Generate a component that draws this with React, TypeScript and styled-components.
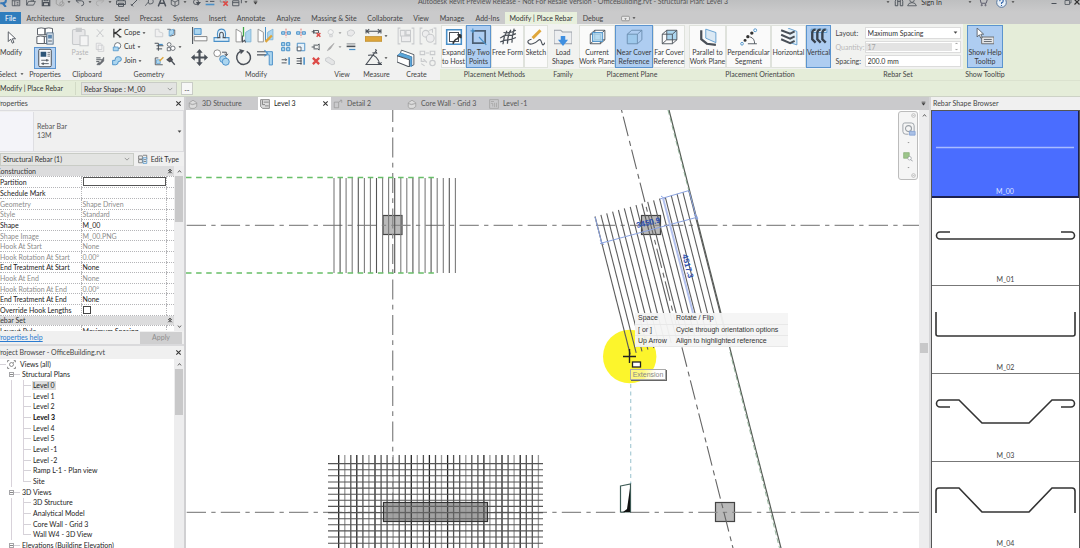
import React from 'react';
import styled, { createGlobalStyle, css } from 'styled-components';

const GlobalStyle = createGlobalStyle`
  * { box-sizing: border-box; }
  html, body { margin: 0; padding: 0; }
  body {
    font-family: Lato, "Liberation Sans", sans-serif;
    font-size: 7px;
    line-height: 9px;
    color: #333;
    background: #cacacb;
    overflow: hidden;
  }
  button, input, select { font: inherit; color: inherit; margin: 0; padding: 0; border: 0; border-radius: 0; background: none; }
`;

const INK = '#4a5058';
const BLUE = '#4a90c8';
const SKY = '#acd6ef';
const GREY = '#c8cacc';
const GOLD = '#dfa63a';
const RED = '#dc4a46';

/* ---------- icons ---------- */

const icons: Record<string, React.ReactNode> = {
  revit: <path d="M-3 16V1h9q5 0 5 4.500t-5 4.500H2M6 10l5 6" fill="none" stroke="#3677b5" strokeWidth="3.200" />,
  home: <g fill="none" stroke={INK} strokeWidth="1.300"><path d="M2 2h12v12H2zM2 6h12M6 6v8M9 9h3M9 11.500h3" /></g>,
  open: <path d="M1 13V3h5l1.500 2H12v2M1 13l3-6h11l-3 6z" fill="none" stroke={INK} strokeWidth="1.300" />,
  save: <path d="M2 2h12v12H2zM5 2v4h6V2M4 14V9h8v5" fill="none" stroke={INK} strokeWidth="1.800" />,
  sync: <g fill="none" stroke="#999" strokeWidth="1.300"><path d="M2 5l5-3 5 3v6l-5 3-5-3z" /><circle cx="11" cy="11" r="3.500" /></g>,
  undo: <path d="M6 2L2 6l4 4M2 6h8q4 0 4 4t-4 4" fill="none" stroke={INK} strokeWidth="1.400" />,
  redo: <path d="M10 2l4 4-4 4M14 6H6q-4 0-4 4t4 4" fill="none" stroke="#aaa" strokeWidth="1.400" />,
  print: <path d="M4 6V2h8v4M1 6h14v6H1zM4 10h8v5H4z" fill="none" stroke={INK} strokeWidth="1.500" />,
  dim: <path d="M2 14L14 2M1 11l4 4M11 1l4 4" fill="none" stroke={INK} strokeWidth="1.500" />,
  tag: <path d="M2 14l5-6M7 8a4 4 0 1 1 4 3H8z" fill="none" stroke={INK} strokeWidth="1.300" />,
  letter: <path d="M2 15L7.500 1h1L14 15M4.500 10h7" fill="none" stroke={INK} strokeWidth="2.200" />,
  cube: <path d="M2 5l6-3 6 3v7l-6 3-6-3zM2 5l6 3 6-3M8 8v7" fill="none" stroke={INK} strokeWidth="1.300" />,
  section: <g fill={INK}><circle cx="8" cy="8" r="4" fill="none" stroke={INK} strokeWidth="1.400" /><path d="M8 0l3 4H5zM8 8h8l-5 6z" /></g>,
  lines: <g fill="none"><path d="M1 3h14M1 7h4M8 7h7" stroke={INK} strokeWidth="1.500" /><path d="M1 12h14" stroke={BLUE} strokeWidth="2.500" /></g>,
  hide: <g fill="none"><path d="M2 3h9v5H2z" stroke="#888" strokeWidth="1.300" /><path d="M7 7l7 7M14 7l-7 7" stroke={RED} strokeWidth="2.500" /></g>,
  windows: <path d="M5 2h10v8M1 6h10v8H1zM1 9h10" fill="none" stroke={INK} strokeWidth="1.400" />,
  binoc: <path d="M2 14V7l2-5h2v12zM10 14V2h2l2 5v7zM6 7h4" fill="none" stroke={INK} strokeWidth="1.500" />,
  person: <g fill="none" stroke={INK} strokeWidth="1.300"><circle cx="8" cy="5" r="3.500" /><path d="M1 14q1-5 7-5t7 5z" /></g>,
  cart: <g fill="none" stroke="#556" strokeWidth="1.500"><path d="M0 2h3l2 8h8l2-6H4" /><circle cx="6" cy="13" r="1" /><circle cx="12" cy="13" r="1" /></g>,
  help: <g fill="none"><circle cx="8" cy="8" r="7" fill="#e8f0f8" stroke="#4a6c98" strokeWidth="1.300" /><path d="M5.500 6q0-2.500 2.500-2.500t2.500 2.300Q10.500 8 8 8.500V10M8 11.500v1.500" stroke="#2f62a8" strokeWidth="1.600" /></g>,
  min: <path d="M3 11h10" stroke={INK} strokeWidth="2" />,
  restore: <path d="M5 5V2h9v8h-3M2 5h9v8H2z" fill="none" stroke={INK} strokeWidth="1.500" />,
  close: <path d="M3 3l10 10M13 3L3 13" stroke="#333" strokeWidth="2.400" />,
  cursor: <path d="M4 1v12l3-3 2 5 2-1-2-4.500h4z" fill="#fff" stroke={INK} strokeWidth="1.100" />,
  typeProps: <g fill="#fff" stroke={INK} strokeWidth=".7"><path d="M2 2q3-1 6 0v5H2zM8 2q3-1 6 0v5H8zM1.500 8.500q3-1 6 0V14h-6z" /><path d="M7.500 8.500h2V14h-2z" /><rect x="9.500" y="5.500" width="5" height="9" fill="#dfe8f0" stroke="#4b6784" /><path d="M10.500 7h3v3h-3z" fill="#5c86ad" stroke="none" /><path d="M10.500 12h3" /></g>,
  props: <g><rect x="3" y="1" width="10" height="14" rx="1" fill="#f7f9fb" stroke={INK} strokeWidth=".8" /><path d="M4.500 3h4.500v4H4.500z" fill="#2d5578" /><path d="M10 3.500h2M10 5h2M10 6.500h2" stroke={INK} strokeWidth=".6" /><path d="M5 9.800h6M5 12.500h6" stroke={INK} strokeWidth=".7" /><path d="M9.500 8.800v2M6.500 11.500v2" stroke={INK} strokeWidth=".9" /></g>,
  paste: <g fill="#e8e8e9" stroke={GREY} strokeWidth=".9"><rect x="2" y="2" width="10" height="12" rx="1" /><path d="M5 1h4v2.500H5z" fill={GREY} /><path d="M8 7h6.500v8H8z" fill="#f4f4f4" /></g>,
  cutGrey: <path d="M3 2l9 10M13 2L4 12M2 13h3M11 13h3" stroke={GREY} strokeWidth="1.600" fill="none" />,
  copyGrey: <path d="M2 2h7l2 2v8H2zM5 5h7l2 2v8H5z" fill="#f2f2f2" stroke={GREY} strokeWidth="1.200" />,
  match: <g><path d="M2 3h7M2 6h9M2 9h5" stroke={INK} strokeWidth="1.500" /><path d="M14 2v6l-6 6H3l2-3 4-1z" fill="#6b6f74" stroke={INK} strokeWidth=".8" /></g>,
  cope: <g fill="none" stroke="#333"><path d="M3 1v14M13 2L6 8l7 6M11 2h4M11 14h4" strokeWidth="2" /><circle cx="5" cy="8" r="2" fill="#333" stroke="none" /></g>,
  cut: <g strokeWidth="1.200"><circle cx="9" cy="6" r="5" fill="#fff" stroke={INK} /><path d="M2 8h8v6H2z" fill={SKY} stroke={BLUE} /></g>,
  join: <path d="M5 5q0-4 5-4t5 4-5 4q0 5-4 5H1V7h4z" fill={SKY} stroke={BLUE} strokeWidth="1.500" />,
  wallGrey: <path d="M2 2h6v4l6 2v6H2z" fill="#f0f0f0" stroke={GREY} strokeWidth="1.300" />,
  beam: <g><path d="M1 2h6v12M4 6h11M4 11h9" stroke={INK} strokeWidth="1.600" fill="none" /><path d="M8 4h6" stroke={BLUE} strokeWidth="2" /></g>,
  splitPaint: <g><path d="M2 14V3h5M2 14h12" stroke={INK} fill="none" strokeWidth="1.400" /><path d="M4 6h6v6H4z" fill={SKY} stroke={BLUE} /><path d="M9 8l6-6" stroke={GOLD} strokeWidth="2.400" /></g>,
  paint: <g><path d="M2 2h5v11l7-2V3L9 5" fill="none" stroke={INK} strokeWidth="1.300" /><path d="M5 4l7-2v7l-7 4z" fill={SKY} stroke={BLUE} /></g>,
  unjoin: <g fill="#fff" stroke={INK} strokeWidth="1.200"><circle cx="5" cy="4" r="3" /><circle cx="11" cy="10" r="3.500" /><path d="M2 9h5v5H2z" /></g>,
  hammer: <path d="M2 6l5-4 3 4-4 3zM8 7l6 7" stroke={INK} fill="#6b5552" strokeWidth="2.200" />,
  align: <g><path d="M1.500 0v16" stroke={INK} strokeWidth="1" /><path d="M3 1.500h6.500v5.500H3z" fill={SKY} stroke={BLUE} strokeWidth=".9" /><path d="M3 9h12v4H3z" fill="#fafafa" stroke="#777" strokeWidth=".8" /></g>,
  offset: <g fill="none"><path d="M1 10h3.500Q3 2 8 2t3.500 8H15v3.500H1z" fill="#e2f0f9" stroke={BLUE} strokeWidth="1" /><path d="M4 10h2.500Q5.500 5 8 5t1.500 5H12" stroke={INK} strokeWidth="1" /></g>,
  mirrorAxis: <g><path d="M1 2l5 3v9H1z" fill="#fff" stroke="#888" strokeWidth=".8" /><path d="M15 2l-5 3v9h5z" fill={SKY} stroke="#7fb4d6" strokeWidth=".8" /><path d="M8 0v9" stroke="#3fa648" strokeWidth="1.200" /><path d="M7 8v6l2-1.500 1 2" stroke={INK} fill="none" /></g>,
  mirrorDraw: <g><path d="M1 2l5 3v9H1z" fill="#fff" stroke="#888" strokeWidth=".8" /><path d="M15 2l-5 3v7h5z" fill={SKY} stroke="#7fb4d6" strokeWidth=".8" /><path d="M8 0v13" stroke={BLUE} strokeWidth="1" /><path d="M8 14l6-6" stroke={GOLD} strokeWidth="2.200" /></g>,
  move: <path d="M8 0l3 3.500H9V7h3.500V5L16 8l-3.500 3V9H9v3.500h2L8 16l-3-3.500h2V9H3.500v2L0 8l3.500-3v2H7V3.500H5z" fill={INK} />,
  copy: <g><circle cx="4" cy="4" r="3.200" fill="#fff" stroke="#888" strokeWidth=".9" /><circle cx="9.500" cy="9.500" r="3.200" fill={SKY} stroke={BLUE} strokeWidth=".9" /><circle cx="12" cy="12" r="3.300" fill={SKY} stroke={BLUE} strokeWidth=".9" /><path d="M8.500 3h4v3M11 4.500l1.500 2 1.500-2" fill="none" stroke={INK} strokeWidth=".9" /></g>,
  rotate: <g><path d="M11 2.200A6.500 6.500 0 1 1 5 2.300" fill="none" stroke={INK} strokeWidth="1.400" /><path d="M4 0l5 1.500-3.500 3.500z" fill={INK} /></g>,
  trim: <g fill="none"><path d="M0 2.500h9M0 5.500h9" stroke={INK} strokeWidth="1" /><path d="M9 2.500h5.500V15h-3V5.500H9" fill={SKY} stroke={BLUE} strokeWidth=".9" /><path d="M7 1l3 3-3 3" stroke={BLUE} strokeWidth="1" /></g>,
  split: <g><path d="M1 6h5v4H1zM10 6h5v4h-5z" fill={SKY} stroke={BLUE} strokeWidth="1.500" /><path d="M8 1v14" stroke={RED} strokeWidth="1.200" strokeDasharray="3 1.500" /></g>,
  pinX: <g fill="none"><path d="M1 6h3M4 3v6M5 4h7v4H5z" stroke={INK} strokeWidth="1.400" /><path d="M9 8l6 6M15 8l-6 6" stroke={RED} strokeWidth="2.400" /></g>,
  array: <path d="M1 1h5v5H1zM9 1h5v5H9zM1 9h5v5H1zM9 9h5v5H9z" fill={SKY} stroke={BLUE} strokeWidth="1.600" />,
  scale: <g><path d="M2 2h12v12H2z" fill="#e7f2fa" stroke={BLUE} strokeWidth="1.500" /><path d="M2 8h6v6H2z" fill="#fff" stroke={INK} strokeWidth="1.300" /></g>,
  pin: <path d="M1 8h4M5 4v8M6 5h5l2-2v10l-2-2H6" fill="none" stroke={INK} strokeWidth="1.500" />,
  trimOne: <g fill="none"><path d="M1 6h8M1 11h8M7 4l2 2-2 2" stroke={INK} strokeWidth="1.500" /><path d="M13 2v12" stroke={BLUE} strokeWidth="2.500" /></g>,
  trimMulti: <g fill="none"><path d="M1 4h8M1 8h8M1 12h8M8 2v12" stroke={INK} strokeWidth="1.500" /><path d="M13 2v12" stroke={BLUE} strokeWidth="2.500" /></g>,
  del: <path d="M3 3l10 10M13 3L3 13" stroke={RED} strokeWidth="3.600" />,
  bulb: <path d="M6 11h4v3H6zM5 10q-3-3-1-6 3-3 7 0 2 3-1 6z" fill="#f4f4f4" stroke={GREY} strokeWidth="1.300" />,
  cloudGrey: <path d="M2 6l5-3 5 1 2 4-5 5-6-1z" fill="#e9e9ea" stroke={GREY} strokeWidth="1.500" />,
  brush: <path d="M2 14l3-5 8-7-6 9z" fill="#aaa" stroke="#aaa" />,
  weights: <g fill="none" stroke={INK}><path d="M1 3h14" strokeWidth="1" /><path d="M1 7h14" strokeWidth="2.500" /><path d="M5 12h10" stroke={BLUE} strokeWidth="2" /></g>,
  boxGrey: <path d="M1 4l5-2 9 6v5l-4 1-10-6z" fill="#e4e5e6" stroke={GREY} strokeWidth="1.500" />,
  ruler: <g><path d="M1 4h14M1 2v4M15 2v4M4 2L1.500 4 4 6M12 2l2.500 2L12 6" fill="none" stroke={INK} strokeWidth="1" /><path d="M0 9h16v4.500H0z" fill={GOLD} stroke="#b98a2c" strokeWidth=".7" /></g>,
  angle: <path d="M11 1L1 14.500h15M3 6q8-2 11 8.500M10 0l1 4-4-.500M14 14.500l-2-2M14 14.500l1.500-2" fill="none" stroke={INK} strokeWidth="1" />,
  groupGrey: <g fill="#ededee" stroke={GREY} strokeWidth=".9"><path d="M3 1H1v14h2M13 1h2v14h-2" fill="none" /><path d="M3 3h4v5H3zM8 3h4v4H8zM4 8h8v5H4z" /></g>,
  linkGrey: <g fill="#ededee" stroke={GREY} strokeWidth=".9"><path d="M3 1H1v14h2M13 1h2v14h-2" fill="none" /><circle cx="6" cy="6" r="3" /><circle cx="10" cy="10" r="3.500" /><path d="M9 3l3-1v3" /></g>,
  component: <g strokeLinejoin="round"><path d="M4 1l11 4v9l-2 1V7L3 3.500z" fill="#fff" stroke={INK} strokeWidth=".8" /><path d="M0 6l3-2.500L13 7v8.500l-2-.500V8.500z" fill="#5ba8da" stroke={BLUE} strokeWidth=".7" /><path d="M0 6l11 3.500V16L0 11.500z" fill="#fff" stroke={INK} strokeWidth=".9" /></g>,
  assemblyGrey: <g fill="none" stroke={GREY} strokeWidth="1"><path d="M1 2h4v3H1zM10 2h4v3h-4zM6 3.500h3M2 8v3h3M2 13l3 2M12 7v2" /><circle cx="12" cy="12.500" r="2.400" /><path d="M4 9l3 3" /></g>,
  expand: <g><path d="M1.500 1.500h13v13h-13z" fill="#fff" stroke={BLUE} strokeWidth="1.400" /><path d="M4 4h8v8H4z" fill="none" stroke={INK} strokeWidth=".9" /><path d="M7 14q2-4 3-4t4-4M14 6v3M14 6h-3" stroke="#333" strokeWidth="1.500" fill="none" /></g>,
  twoPoints: <g fill="none"><path d="M2.500 2.500h11v11h-11z" stroke="#4c5f74" strokeWidth="1.500" /><path d="M8 8l6.500 7M0.500 2.500h4M2.500 .500v4" stroke={BLUE} strokeWidth="1" /></g>,
  freeform: <path d="M1 12.500q4-2 7-2t7-2M1 9q4-3 7-2.500T15 5M4 4q6 1 11-2M3.500 14.500Q4 8 7 2.500M7.500 14q0-7 3-12.500M11.500 13q0-6 2-12.500" fill="none" stroke={INK} strokeWidth="1.100" />,
  sketch: <g fill="none"><path d="M4 10q-4 1-3 3t4 1 5-3 3 2 3 0" stroke={INK} strokeWidth="1" /><path d="M5 9l7-7" stroke={GOLD} strokeWidth="2.600" /></g>,
  load: <g><path d="M0 2h6l1.500 1.500H16V14H0z" fill="#eceef0" stroke="#9aa0a8" strokeWidth=".9" /><path d="M6 7h4v3.500h2.500L8 16l-4.500-5.500H6z" fill="#3f8fe0" /></g>,
  box: <g strokeLinejoin="round" strokeWidth=".8" stroke={INK} fill="none"><path d="M2 5.500L6 2h9v8.500L11 14H2zM2 5.500h9V14M11 5.500L15 2M6 2v8.500h9M2 14l4-3.500" /><path d="M4 4h9v8H4z" fill={SKY} fillOpacity=".85" stroke={BLUE} /></g>,
  boxNear: <g strokeLinejoin="round" strokeWidth=".8" stroke="#6a8cae" fill="none"><path d="M2 5.500h9V14H2z" fill="#9ec9ec" /><path d="M2 5.500L6 2h9l-4 3.500M15 2v8.500L11 14" /></g>,
  boxFar: <g strokeLinejoin="round" strokeWidth=".8" stroke={INK} fill="none"><path d="M6 2h9v8.500H6z" fill={SKY} /><path d="M2 5.500h9V14H2zM2 5.500L6 2M11 5.500L15 2M15 10.500L11 14M2 14l4-3.500" /></g>,
  parallel: <g><path d="M6 1l9 3v9L6 9z" fill="#dbe9f4" stroke={BLUE} strokeWidth=".7" /><path d="M2 2v8l5 4 8 1" fill="none" stroke={INK} strokeWidth="2" /></g>,
  perp: <g><path d="M7 14h8M9 8q4 1 4 6" stroke={INK} fill="none" strokeWidth=".8" /><g fill="#333"><circle cx="4.500" cy="11" r="1.300" /><circle cx="7" cy="7.700" r="1.500" /><circle cx="10.500" cy="4.500" r="1.500" /></g><circle cx="1.800" cy="14" r="1.200" fill="#fff" stroke={BLUE} strokeWidth=".8" /><circle cx="13.500" cy="2" r="1.300" fill="#fff" stroke={BLUE} strokeWidth=".8" /></g>,
  horizontal: <g fill="none"><path d="M7 0l8 3v12l-6-2" stroke={BLUE} strokeWidth=".7" fill="#e3eff7" /><path d="M1 2l8 3 4-2M1 6l8 3.500 4-2M1 10l8 3.500 4-2" stroke={INK} strokeWidth="1.800" /></g>,
  vertical: <g fill="none"><path d="M1 1h14v3H1z" fill="#d5e6f7" stroke={BLUE} strokeWidth=".7" /><path d="M5 1.500q-3 0-3 3V10l3 3M9.500 1.500q-3 0-3 3V10l3 3M14 1.500q-3 0-3 3V10l3 3" stroke="#38424e" strokeWidth="2.100" /></g>,
  tooltip: <g><path d="M5 8h11v6H5z" fill="#e4e6e8" stroke="#666" strokeWidth=".8" /><path d="M7 10.200h7M7 12h7" stroke={INK} strokeWidth=".7" /><path d="M1 0v8l2-2 1.200 3 1.300-.500L4.300 5.500h2.500z" fill="#fff" stroke={INK} strokeWidth=".7" /></g>,
  view3d: <path d="M2 6l6-4 6 4v6l-4 3H4l-2-3zM2 7l5 2 7-2" fill="#dcdcdc" stroke="#999" strokeWidth="1.200" />,
  plan: <g fill="none" stroke="#777" strokeWidth="1.300"><path d="M1 1h14v14H4l-3-3z" fill="#ddd" /><path d="M4 2v7h4M6 5h8M8 11h6" /></g>,
  detail: <path d="M2 5h7v9H2zM9 5l5-3M14 2v4M11 2h3" fill="none" stroke="#999" strokeWidth="1.200" />,
  sheet: <path d="M1 1h14v14H1zM3 4h5M3 7h3v5M9 6v7M12 6v7" fill="none" stroke="#a2a2a2" strokeWidth="1.200" />,
  editType: <g fill="none" stroke="#666" strokeWidth="1.200"><path d="M1 3h6v5H1zM8 2h6v6M1 9h6v5H1z" /><path d="M8 6h6v9H8z" fill="#e8f1f8" stroke={BLUE} /><path d="M9 9h4M9 12h4" /></g>,
  views: <g fill="none" stroke="#666" strokeWidth="1.300"><path d="M1 4V1h3M12 1h3v3M15 12v3h-3M4 15H1v-3" /><circle cx="8" cy="8" r="3.500" /><path d="M11 5l2-2" /></g>,
  wheel: <g fill="none" stroke="#9aa0a6"><path d="M2 3q0-2 2-2h7q3 0 3 3v6M2 3v7q0 3 3 3h3" strokeWidth="1" /><circle cx="8" cy="7" r="3.200" strokeWidth="1.200" /><path d="M9 10h6v4H9z" fill="#a9c0e6" stroke="#8aa5d4" /></g>,
  zoomRegion: <g><path d="M1 1h9v9H1z" fill="#9cc58a" stroke="#7fa86d" /><circle cx="10.500" cy="10" r="2.800" fill="#fff" stroke="#8a9096" /><path d="M12.500 12l3 3" stroke="#8a9096" strokeWidth="1.400" /></g>,
  gear: <g fill="none" stroke="#999" strokeWidth="1.600"><circle cx="8" cy="8" r="6" /><path d="M5 8h6" /></g>,
  record: <g><rect x="1" y="4" width="14" height="8" rx="2" fill="#e8e8e8" stroke="#777" strokeWidth="1.200" /><path d="M6 8h4l-2 2z" fill="#444" /></g>,
  chevUp: <path d="M3 11l5-6 5 6" fill="none" stroke="#333" strokeWidth="2.400" />,
  chevDown: <path d="M3 5l5 6 5-6" fill="none" stroke="#333" strokeWidth="2.400" />,
  chevLight: <path d="M2 5l6 6 6-6" fill="none" stroke="#777" strokeWidth="1.800" />,
  dblUp: <path d="M3 8l5-5 5 5M3 14l5-5 5 5M8 4v10" fill="none" stroke="#333" strokeWidth="2.200" />,
  caret: <path d="M2 5h12l-6 7z" fill="#444" />,
  caretGrey: <path d="M2 5h12l-6 7z" fill="#999" />,
  menuDown: <path d="M2 2h12v3H2zM2 7h12l-6 7z" fill="#333" />,
};

const Svg = styled.svg<{ $size: number }>`
  display: block;
  flex: none;
  width: ${p => p.$size}px;
  height: ${p => p.$size}px;
`;

const Icon = ({ name, size = 10 }: { name: string; size?: number }) => (
  <Svg viewBox="0 0 16 16" $size={size} aria-hidden="true">{icons[name]}</Svg>
);

/* ---------- window frame ---------- */

const Window = styled.div`
  display: flex;
  flex-direction: column;
  height: 100vh;
  overflow: hidden;
`;

const TitleBar = styled.header`
  display: flex;
  align-items: flex-end;
  height: 12px;
  overflow: hidden;
  background: linear-gradient(#bebfc0, #cacacb);
`;

const TitleGroup = styled.div`
  display: flex;
  flex: none;
  align-items: center;
  height: 18px;
  padding-bottom: 2px;
`;

const TitleItem = styled.button<{ $w: number }>`
  display: flex;
  flex: none;
  justify-content: center;
  width: ${p => p.$w}px;
`;

const TitleText = styled.h1`
  flex: 1;
  margin: 0;
  height: 16px;
  overflow: hidden;
  font-size: 7px;
  line-height: 10px;
  font-weight: 400;
  text-align: center;
  white-space: nowrap;
  color: #555;
`;

const Gap = styled.span<{ $w: number }>`
  flex: none;
  width: ${p => p.$w}px;
`;

const Tabs = styled.nav`
  display: flex;
  flex: none;
  height: 12px;
  background: #cacacb;
`;

const Tab = styled.button<{ $w: number; $kind?: 'file' | 'active' }>`
  display: flex;
  flex: none;
  align-items: center;
  justify-content: center;
  width: ${p => p.$w}px;
  white-space: nowrap;
  color: #444;
  ${p => p.$kind === 'file' && css`background: #2f7dbd; color: #fff;`}
  ${p => p.$kind === 'active' && css`background: #e8f0dc; color: #333;`}
`;

/* ---------- ribbon ---------- */

const Ribbon = styled.div`
  display: flex;
  flex: none;
  height: 56px;
  background: #e5edd9;
`;

const PanelBox = styled.section<{ $w: number; $green?: boolean; $bleed?: boolean }>`
  display: flex;
  flex: none;
  flex-direction: column;
  width: ${p => p.$w}px;
  margin-left: ${p => (p.$bleed ? -4 : 0)}px;
  background: ${p => (p.$green ? '#e5edd9' : '#f1f1f1')};
`;

const PanelBody = styled.div<{ $plain?: boolean }>`
  display: flex;
  flex: 1;
  align-items: center;
  justify-content: center;
  background: ${p => (p.$plain ? 'transparent' : '#f1f2f0')};
`;

const PanelTitle = styled.h2`
  display: flex;
  align-items: center;
  justify-content: center;
  gap: 3px;
  height: 11px;
  padding-bottom: 1px;
  margin: 0;
  font-size: 7px;
  font-weight: 400;
  white-space: nowrap;
  color: #444;
`;

const Panel = ({ title, width, green, bleed, plain, menu, children }: {
  title: string; width: number; green?: boolean; bleed?: boolean; plain?: boolean; menu?: boolean; children: React.ReactNode;
}) => (
  <PanelBox $w={width} $green={green} $bleed={bleed}>
    <PanelBody $plain={plain}>{children}</PanelBody>
    <PanelTitle>{title}{menu && <Icon name="caret" size={4} />}</PanelTitle>
  </PanelBox>
);

const BigButton = styled.button<{ $w: number; $on?: boolean; $flat?: boolean; $dim?: boolean }>`
  display: flex;
  flex: none;
  flex-direction: column;
  align-items: center;
  width: ${p => p.$w}px;
  height: 43px;
  border: 1px solid ${p => (p.$on ? '#5b94cf' : p.$flat ? 'transparent' : '#dfe2dc')};
  background: ${p => (p.$on ? '#aecdf1' : p.$flat ? 'transparent' : '#fafafa')};
  color: ${p => (p.$dim ? '#b5b5b5' : '#3a3a3a')};
  line-height: 9px;
  white-space: nowrap;
`;

const IconSlot = styled.span`
  display: flex;
  flex: none;
  align-items: center;
  height: 22px;
`;

const ButtonLabel = styled.span`
  display: flex;
  flex-direction: column;
  align-items: center;
`;

const Big = ({ icon, lines, w, size = 18, on, flat, dim, menu }: {
  icon: string; lines: string[]; w: number; size?: number; on?: boolean; flat?: boolean; dim?: boolean; menu?: boolean;
}) => (
  <BigButton $w={w} $on={on} $flat={flat} $dim={dim}>
    <IconSlot><Icon name={icon} size={size} /></IconSlot>
    <ButtonLabel>
      {lines.map(l => <span key={l}>{l}</span>)}
      {menu && <Icon name="caretGrey" size={4} />}
    </ButtonLabel>
  </BigButton>
);

const ToolGrid = styled.div<{ $cols: string; $row: number }>`
  display: grid;
  flex: none;
  grid-template-columns: ${p => p.$cols};
  grid-auto-rows: ${p => p.$row}px;
`;

const Tool = styled.button<{ $on?: boolean; $start?: boolean }>`
  display: flex;
  align-items: center;
  justify-content: ${p => (p.$start ? 'flex-start' : 'center')};
  gap: 2px;
  ${p => p.$on && css`background: #b5d2f2; outline: 1px solid #5b94cf; outline-offset: -1px;`}
`;

const SetForm = styled.form`
  display: grid;
  grid-template-columns: 29px 96px;
  grid-auto-rows: 12px;
  row-gap: 2px;
  align-items: stretch;
  line-height: 12px;
`;

const FieldLabel = styled.label<{ $dim?: boolean }>`
  color: ${p => (p.$dim ? '#b8b8b8' : '#444')};
`;

const Field = styled.span`
  display: flex;
  align-items: center;
  padding-right: 2px;
  border: 1px solid #dcdcdc;
  background: #fff;
`;

const Select = styled.select`
  appearance: none;
  flex: 1;
  min-width: 0;
  height: 10px;
  padding-left: 2px;
  line-height: 10px;
`;

const TextInput = styled.input`
  flex: 1;
  min-width: 0;
  height: 8px;
  padding-left: 2px;
  &:disabled { background: #e3e3e3; color: #a5a5a5; }
`;

const Spinner = styled.span`
  display: flex;
  flex-direction: column;
  gap: 3px;
  padding-left: 3px;
`;

const OptionsBar = styled.div`
  display: flex;
  flex: none;
  align-items: center;
  height: 17px;
  border-top: 1px solid #dbe2cf;
  border-bottom: 1px solid #cdd2c6;
  background: #e5edd9;
`;

const OptionsTitle = styled.strong`
  flex: none;
  width: 76px;
  border-right: 1px solid #d2dac6;
  font-weight: 400;
  line-height: 13px;
  white-space: nowrap;
`;

const Combo = styled.span<{ $w?: number }>`
  display: flex;
  align-items: center;
  ${p => (p.$w ? css`flex: none; width: ${p.$w}px;` : css`flex: 1;`)}
  height: 13px;
  padding-right: 3px;
  border: 1px solid #c9ccc6;
  background: #e3e4e2;
`;

const MoreButton = styled.button`
  width: 12px;
  height: 13px;
  margin-left: 4px;
  border: 1px solid #c9ccc6;
  background: #f7f7f7;
`;

/* ---------- left docks ---------- */

const Workspace = styled.main`
  display: flex;
  flex: 1;
  min-height: 0;
`;

const LeftDock = styled.aside`
  display: flex;
  flex: none;
  flex-direction: column;
  width: 186px;
  border-right: 2px solid #d0d0d2;
  background: #f0f0f0;
`;

const DockTitle = styled.h2<{ $indent?: number }>`
  display: flex;
  flex: none;
  align-items: center;
  justify-content: space-between;
  height: 13px;
  margin: 0;
  padding: 0 2px;
  overflow: hidden;
  font-size: 7px;
  font-weight: 400;
  color: #444;
  text-indent: ${p => p.$indent ?? 0}px;
  white-space: nowrap;
`;

const PlainButton = styled.button`
  display: flex;
  align-items: center;
  gap: 3px;
  text-indent: 0;
`;

const TypePicker = styled.div`
  display: flex;
  flex: none;
  align-items: center;
  gap: 3px;
  height: 42px;
  padding-right: 1px;
  border: 1px solid #dcdcdf;
  border-left: 0;
`;

const Thumb = styled.div`
  width: 34px;
  height: 39px;
  border-right: 1px solid #dedee2;
  background: #f4f4f9;
`;

const TypeName = styled.p`
  flex: 1;
  margin: 0;
  color: #555;
`;

const FilterRow = styled.div`
  display: flex;
  flex: none;
  align-items: center;
  gap: 4px;
  height: 14px;
  padding-right: 5px;
`;

const Scrolled = styled.div<{ $h?: number }>`
  display: flex;
  ${p => (p.$h ? css`flex: none; height: ${p.$h}px;` : css`flex: 1; min-height: 0;`)}
  overflow: hidden;
  background: #fff;
`;

const ScrollBar = styled.div`
  display: flex;
  flex: none;
  flex-direction: column;
  align-items: center;
  width: 10px;
  padding: 3px 0 2px;
  background: #ededee;
`;

const Thumbbar = styled.span<{ $h: number; $top?: number }>`
  flex: none;
  width: 8px;
  height: ${p => p.$h}px;
  margin-top: ${p => p.$top ?? 2}px;
  margin-bottom: auto;
  background: #c8c8c9;
`;

const PropTable = styled.table`
  flex: 1;
  height: 171px;
  border-collapse: collapse;
  table-layout: fixed;
  th, td {
    padding: 0;
    font-weight: 400;
    text-align: left;
    white-space: nowrap;
    line-height: 8px;
    border-bottom: 1px dotted #b5b5b8;
  }
  td { border-left: 1px dotted #b5b5b8; padding-left: 1px; }
`;

const SectionRow = styled.tr`
  background: #dcdcdd;
  th { text-indent: -4px; overflow: hidden; }
`;

const PropRow = styled.tr<{ $dim?: boolean }>`
  color: ${p => (p.$dim ? '#8c8c8c' : '#222')};
`;

const CellInput = styled.input`
  display: block;
  width: 100%;
  height: 9px;
  border: 1px solid #555;
`;

const Tick = styled.input`
  appearance: none;
  display: block;
  width: 8px;
  height: 8px;
  border: 1px solid #444;
  background: #fff;
`;

const SectionEnd = styled.div`
  display: flex;
  justify-content: center;
`;

const DockFooter = styled.div`
  display: flex;
  flex: none;
  align-items: center;
  justify-content: space-between;
  height: 15px;
  padding-right: 2px;
  border-bottom: 2px solid #dadadc;
  overflow: hidden;
`;

const HelpLink = styled.a`
  color: #2b7bd0;
  text-indent: -4px;
`;

const ApplyButton = styled.button`
  width: 42px;
  height: 12px;
  background: #cfcfd0;
  color: #8e8e8e;
`;

const Tree = styled.ul`
  display: grid;
  flex: 1;
  grid-template-rows: repeat(18, 1fr);
  height: 192px;
  margin: 0;
  padding: 0;
  list-style: none;
`;

const TreeRow = styled.li<{ $bold?: boolean }>`
  display: flex;
  align-items: center;
  white-space: nowrap;
  font-weight: ${p => (p.$bold ? 900 : 400)};
  color: #222;
`;

const Guide = styled.span<{ $w: number; $half?: boolean }>`
  flex: none;
  align-self: ${p => (p.$half ? 'flex-start' : 'stretch')};
  width: ${p => p.$w}px;
  height: ${p => (p.$half ? '50%' : 'auto')};
  border-left: 1px solid #d8d2da;
`;

const Dash = styled.span<{ $w: number }>`
  flex: none;
  width: ${p => p.$w}px;
  height: 1px;
  margin-right: 1px;
  background: #d5d2d8;
`;

const Expander = styled.button`
  display: flex;
  flex: none;
  align-items: center;
  justify-content: center;
  width: 5px;
  height: 5px;
  border: 1px solid #a5a5a8;
  background: linear-gradient(#888, #888) center / 3px 1px no-repeat #fff;
`;

const NodeText = styled.span<{ $sel?: boolean }>`
  padding: 0 1px;
  background: ${p => (p.$sel ? '#dcdcdd' : 'transparent')};
`;

/* ---------- drawing area ---------- */

const Center = styled.section`
  display: flex;
  flex: 1;
  flex-direction: column;
  min-width: 0;
  border-right: 2px solid #d5d5d7;
  background: #fff;
`;

const ViewTabs = styled.div`
  display: flex;
  flex: none;
  align-items: stretch;
  height: 13px;
  padding-right: 3px;
  background: #cacacc;
`;

const ViewTab = styled.button<{ $w: number; $on?: boolean }>`
  display: flex;
  flex: none;
  align-items: center;
  gap: 4px;
  width: ${p => p.$w}px;
  padding: 0 2px;
  white-space: nowrap;
  color: ${p => (p.$on ? '#222' : '#555')};
  background: ${p => (p.$on ? '#fff' : 'transparent')};
`;

const Push = styled.span`
  flex: 1;
`;

const ViewBody = styled.div`
  display: flex;
  flex: 1;
  min-height: 0;
`;

const Canvas = styled.div`
  position: relative;
  flex: 1;
  overflow: hidden;
`;

const Drawing = styled.svg`
  display: block;
  width: 100%;
  height: 100%;
`;

const Hints = styled.table`
  position: absolute;
  left: 449px;
  top: 203px;
  width: 153px;
  border-collapse: collapse;
  background: rgba(244, 244, 244, 0.95);
  font-family: "Liberation Sans", sans-serif;
  th, td {
    height: 11px;
    padding: 0 0 0 3px;
    border-bottom: 1px solid #e8e8e8;
    font-weight: 400;
    line-height: 10px;
    text-align: left;
    white-space: nowrap;
  }
  th { width: 38px; }
`;

const SnapTip = styled.div`
  position: absolute;
  left: 444px;
  top: 259px;
  width: 36px;
  height: 11px;
  border: 1px solid #aaa;
  box-shadow: 1px 1px 0 #666;
  background: linear-gradient(90deg, rgba(255, 248, 150, 0.8) 35%, #fff 75%);
  font-family: "Liberation Sans", sans-serif;
  line-height: 9px;
  text-align: center;
  color: #888;
`;

const NavBar = styled.div`
  position: absolute;
  top: 1px;
  right: 1px;
  display: flex;
  flex-direction: column;
  align-items: center;
  gap: 4px;
  width: 20px;
  height: 69px;
  padding: 1px;
  border: 1px solid #bcbcbc;
  border-radius: 3px;
  background: #f5f5f5;
`;

const NavEnd = styled.span`
  align-self: flex-end;
`;

const NavRule = styled.span`
  width: 14px;
  height: 1px;
  background: #ccc;
`;

/* ---------- shape browser ---------- */

const RightDock = styled.aside`
  display: flex;
  flex: none;
  flex-direction: column;
  width: 149px;
  background: #f0f0f0;
`;

const ShapeList = styled.div`
  flex: 1;
  min-height: 0;
  overflow: hidden;
  border: 1px solid #555;
  border-bottom: 0;
  background: #fff;
`;

const ShapeCell = styled.button<{ $on?: boolean }>`
  display: flex;
  flex-direction: column;
  align-items: center;
  width: 100%;
  height: ${p => (p.$on ? 87 : 88)}px;
  border-bottom: ${p => (p.$on ? '2px solid #1c2150' : '1px solid #777')};
  border-right: ${p => (p.$on ? '1px solid #1c2150' : '0')};
  background: ${p => (p.$on ? '#4a6dff' : '#fff')};
  color: ${p => (p.$on ? '#dfe5ff' : '#444')};
`;

const ShapeArt = styled.svg`
  display: block;
  width: 100%;
  height: 77px;
`;

/* ---------- data ---------- */

const quick: [string, number, number?][] = [
  ['revit', 8], ['home', 16], ['open', 14], ['save', 15], ['sync', 13], ['caret', 6, 4], ['undo', 15], ['caret', 5, 4],
  ['redo', 15], ['caret', 6, 4], ['print', 15], ['dim', 13], ['tag', 15], ['letter', 12], ['cube', 14], ['caret', 6, 4],
  ['section', 15], ['lines', 14], ['hide', 13], ['windows', 13], ['caret', 6, 4], ['menuDown', 13, 5],
];

const ribbonTabs: [string, number][] = [
  ['Architecture', 49], ['Structure', 39], ['Steel', 26], ['Precast', 32], ['Systems', 37], ['Insert', 27], ['Annotate', 40],
  ['Analyze', 35], ['Massing & Site', 56], ['Collaborate', 46], ['View', 26], ['Manage', 36], ['Add-Ins', 35],
  ['Modify | Place Rebar', 72], ['Debug', 32],
];

const properties: [string, string, boolean][] = [
  ['Partition', 'input', false], ['Schedule Mark', '', false], ['Geometry', 'Shape Driven', true], ['Style', 'Standard', true],
  ['Shape', 'M_00', false], ['Shape Image', 'M_00.PNG', true], ['Hook At Start', 'None', true],
  ['Hook Rotation At Start', '0.00°', true], ['End Treatment At Start', 'None', false], ['Hook At End', 'None', true],
  ['Hook Rotation At End', '0.00°', true], ['End Treatment At End', 'None', false], ['Override Hook Lengths', 'check', false],
];

const plans = ['Level 0', 'Level 1', 'Level 2', 'Level 3', 'Level 4', 'Level 5', 'Level -1', 'Level -2', 'Ramp L-1 - Plan view', 'Site'];
const views3d = ['3D Structure', 'Analytical Model', 'Core Wall - Grid 3', 'Wall W4 - 3D View'];

const shapes: [string, string][] = [
  ['M_00', 'M4 37H143'],
  ['M_01', 'M18 34H8a3.300 3.300 0 0 0 0 7H139a3.300 3.300 0 0 0 0-7H129'],
  ['M_02', 'M4 26V48q0 2 2 2H141q2 0 2-2V26'],
  ['M_03', 'M18 33H8a3.300 3.300 0 0 1 0-7H27L50 49H97L120 26H139a3.300 3.300 0 0 1 0 7H129'],
  ['M_04', 'M4 51V29q0-3 3-3H27L50 50H97L120 26H140q3 0 3 3V51'],
];

const range = (n: number) => Array.from({ length: n }, (_, i) => i);

const Plan = () => (
  <Drawing viewBox="186 110 733 438" preserveAspectRatio="xMinYMin slice" role="img" aria-label="Level 3 structural plan">
    <g fill="#b9b9b9" stroke="#444" strokeWidth="1.200">
      <rect x="383" y="215.500" width="19" height="19" />
      <rect x="641.500" y="215.500" width="19" height="19" />
      <rect x="715.500" y="502.500" width="19" height="19" />
      <rect x="383.500" y="502.500" width="104" height="19" />
    </g>
    <g fill="none" stroke="#8c8c8c" strokeWidth="1.300">
      <path d="M186.700 225.300H919M186.700 512.300H919" strokeDasharray="19.300 5.300 4.300 5.200" />
      <path d="M392.700 101.900V512" strokeDasharray="20 5.300 4.700 5.500" />
    </g>
    <g fill="none" stroke="#666" strokeWidth="1.100">
      <path d="M621 108L733.500 550" strokeDasharray="5 4 20 5" />
      <path d="M669 110L781.500 550" stroke="#565c56" strokeWidth="1.200" />
      <path d="M668 110L692 203M730 352L780 550" stroke="#7da487" strokeDasharray="5 3" strokeWidth=".8" />
    </g>
    <g fill="none" strokeWidth="1.100">
      {range(21).map(i => <path key={i} d={`M${(334 + i * 6.07).toFixed(1)} 178V273`} stroke={i % 3 === 1 ? '#555' : '#7c7c7c'} />)}
    </g>
    <path d="M186 177.500H437M186 273H437" stroke="#68bf68" strokeWidth="1.500" strokeDasharray="5.500 4.600" fill="none" />
    <g fill="none" stroke="#333">
      {range(34).map(i => (
        <path key={i} d={`M${(338.7 + i * 6.05).toFixed(1)} 455V548`} strokeWidth="1.300" stroke={i % 4 === 1 ? '#999' : i % 3 === 0 ? '#222' : '#555'} />
      ))}
      {range(14).map(i => <path key={i} d={`M328 ${(463.6 + i * 6.12).toFixed(1)}H543`} strokeWidth="1.100" stroke="#555" />)}
    </g>
    <rect x="383.500" y="502.500" width="104" height="19" fill="#777" fillOpacity=".35" stroke="#333" />
    <circle cx="629.700" cy="356.500" r="26.700" fill="#fcf52c" />
    <g fill="none" stroke="#5c5c5c" strokeWidth="1.100">
      {range(17).map(i => {
        const x = 595 + i * 5.86;
        const y = 216.500 - i * 1.62;
        return <path key={i} d={`M${x.toFixed(1)} ${y.toFixed(1)}l${(138 * 0.256).toFixed(1)} 138`} />;
      })}
    </g>
    <g fill="none" stroke="#8ba3e0" strokeWidth="1">
      <path d="M595 217L602 244M600 243.500L698 217M660 199L689 190.500L697 220M661 196l4 3M694 214l4 5M600 240l4 5" />
      <path d="M663 198L693 313" stroke="#b3c1ee" strokeWidth="2" />
    </g>
    <g fill="#2c4fb0" fontFamily="'Liberation Sans', sans-serif" fontSize="8" fontWeight="700">
      <text transform="translate(637 228) rotate(-13)">3450.9</text>
      <text transform="translate(682 255) rotate(75)">4517.3</text>
    </g>
    <path d="M630.700 384V484" stroke="#a9ccd6" strokeWidth="1.200" strokeDasharray="4 3.500" />
    <path d="M620.500 486l10-2v28h-10z" fill="#fff" stroke="#3d5a55" strokeWidth="1.200" />
    <path d="M630 488v24h-7l4-3z" fill="#111" />
    <path d="M629.500 349v14M623 356.500h13" stroke="#222" strokeWidth="1.400" />
    <rect x="632.500" y="362" width="8" height="5" fill="#fff" stroke="#222" strokeWidth="1.300" />
  </Drawing>
);

const Leaf = ({ name, last }: { name: string; last: boolean }) => (
  <TreeRow $bold={name === 'Level 3'}>
    <Gap $w={11} />
    <Guide $w={12} />
    <Guide $w={1} $half={last} />
    <Dash $w={7} />
    <NodeText $sel={name === 'Level 0'}>{name}</NodeText>
  </TreeRow>
);

const Branch = ({ name }: { name: string }) => (
  <TreeRow>
    <Gap $w={9} />
    <Expander aria-label={`Collapse ${name}`} />
    <Dash $w={6} />
    <NodeText>{name}</NodeText>
  </TreeRow>
);

const Bar = ({ thumb, top, open }: { thumb: number; top?: number; open?: boolean }) => (
  <ScrollBar>
    <Icon name="chevUp" size={5} />
    <Thumbbar $h={thumb} $top={top} />
    {!open && <Icon name="chevDown" size={5} />}
  </ScrollBar>
);

export default function App() {
  return (
    <Window>
      <GlobalStyle />
      <TitleBar>
        <TitleGroup>
          {quick.map(([n, w, s], i) => <TitleItem key={i} $w={w} aria-label={n}><Icon name={n} size={s ?? 10} /></TitleItem>)}
        </TitleGroup>
        <TitleText>Autodesk Revit Preview Release - Not For Resale Version - OfficeBuilding.rvt - Structural Plan: Level 3</TitleText>
        <TitleGroup>
          <TitleItem $w={8} aria-label="Expand search"><Icon name="caret" size={4} /></TitleItem>
          <TitleItem $w={13} aria-label="Search"><Icon name="binoc" /></TitleItem>
          <TitleItem $w={14} aria-label="Account"><Icon name="person" /></TitleItem>
          <TitleItem $w={25}>Sign In</TitleItem>
          <Gap $w={22} />
          <TitleItem $w={8} aria-label="Account menu"><Icon name="caret" size={4} /></TitleItem>
          <TitleItem $w={18} aria-label="App store"><Icon name="cart" /></TitleItem>
          <TitleItem $w={18} aria-label="Help"><Icon name="help" size={11} /></TitleItem>
          <TitleItem $w={6} aria-label="Help menu"><Icon name="caret" size={4} /></TitleItem>
          <Gap $w={29} />
          <TitleItem $w={17} aria-label="Minimize"><Icon name="min" size={8} /></TitleItem>
          <TitleItem $w={12} aria-label="Restore"><Icon name="restore" size={8} /></TitleItem>
          <TitleItem $w={6} aria-label="Close"><Icon name="close" size={8} /></TitleItem>
        </TitleGroup>
      </TitleBar>
      <Tabs>
        <Tab $w={21} $kind="file">File</Tab>
        {ribbonTabs.map(([t, w]) => <Tab key={t} $w={w} $kind={t.includes('|') ? 'active' : undefined}>{t}</Tab>)}
        <Tab $w={38} aria-label="Ribbon display"><Icon name="record" size={9} /><Gap $w={2} /><Icon name="caret" size={4} /></Tab>
      </Tabs>
      <Ribbon>
        <Panel title="Select" width={30} bleed menu>
          <Big icon="cursor" lines={['Modify']} w={28} size={13} flat />
        </Panel>
        <Panel title="Properties" width={38}>
          <ToolGrid $cols="22px" $row={22}>
            <Tool aria-label="Type properties"><Icon name="typeProps" size={20} /></Tool>
            <Tool $on aria-label="Properties"><Icon name="props" size={20} /></Tool>
          </ToolGrid>
        </Panel>
        <Panel title="Clipboard" width={46}>
          <Big icon="paste" lines={['Paste']} w={26} size={20} flat dim menu />
          <ToolGrid $cols="14px" $row={14}>
            {['cutGrey', 'copyGrey', 'match'].map(n => <Tool key={n} aria-label={n}><Icon name={n} /></Tool>)}
          </ToolGrid>
        </Panel>
        <Panel title="Geometry" width={78}>
          <ToolGrid $cols="40px 14px 20px" $row={14}>
            <Tool $start><Icon name="cope" />Cope<Icon name="caret" size={4} /></Tool>
            <Tool aria-label="Wall opening"><Icon name="wallGrey" /></Tool>
            <Tool $start aria-label="Paint"><Icon name="paint" /></Tool>
            <Tool $start><Icon name="cut" />Cut<Icon name="caret" size={4} /></Tool>
            <Tool aria-label="Beam joins"><Icon name="beam" /></Tool>
            <Tool $start aria-label="Wall joins"><Icon name="unjoin" /><Icon name="caret" size={4} /></Tool>
            <Tool $start><Icon name="join" />Join<Icon name="caret" size={4} /></Tool>
            <Tool aria-label="Split face"><Icon name="splitPaint" /></Tool>
            <Tool $start aria-label="Demolish"><Icon name="hammer" /></Tool>
          </ToolGrid>
        </Panel>
        <Panel title="Modify" width={136}>
          <ToolGrid $cols="repeat(4, 22px)" $row={22}>
            {['align', 'offset', 'mirrorAxis', 'mirrorDraw', 'move', 'copy', 'rotate', 'trim'].map(n => (
              <Tool key={n} aria-label={n}><Icon name={n} size={17} /></Tool>
            ))}
          </ToolGrid>
          <Gap $w={2} />
          <ToolGrid $cols="repeat(3, 15px)" $row={14}>
            {['split', 'split', 'pinX', 'array', 'scale', 'pin', 'trimOne', 'trimMulti', 'del'].map((n, i) => (
              <Tool key={i} aria-label={n}><Icon name={n} /></Tool>
            ))}
          </ToolGrid>
        </Panel>
        <Panel title="View" width={36}>
          <ToolGrid $cols="18px 16px" $row={14}>
            <Tool aria-label="Hide"><Icon name="bulb" /><Icon name="caretGrey" size={4} /></Tool>
            <Tool aria-label="Displace"><Icon name="cloudGrey" /></Tool>
            <Tool aria-label="Override"><Icon name="brush" /><Icon name="caretGrey" size={4} /></Tool>
            <Tool aria-label="Linework"><Icon name="weights" /></Tool>
            <Tool $start aria-label="Selection box"><Icon name="boxGrey" /></Tool>
          </ToolGrid>
        </Panel>
        <Panel title="Measure" width={33}>
          <ToolGrid $cols="28px" $row={22}>
            <Tool aria-label="Measure"><Icon name="ruler" size={17} /><Icon name="caret" size={4} /></Tool>
            <Tool aria-label="Dimension"><Icon name="angle" size={17} /><Icon name="caret" size={4} /></Tool>
          </ToolGrid>
        </Panel>
        <Panel title="Create" width={47}>
          <ToolGrid $cols="repeat(2, 22px)" $row={22}>
            {['groupGrey', 'linkGrey', 'component', 'assemblyGrey'].map(n => <Tool key={n} aria-label={n}><Icon name={n} size={18} /></Tool>)}
          </ToolGrid>
        </Panel>
        <Panel title="Placement Methods" width={109} green>
          <Big icon="expand" lines={['Expand', 'to Host']} w={25} />
          <Big icon="twoPoints" lines={['By Two', 'Points']} w={25} on />
          <Big icon="freeform" lines={['Free Form']} w={33} />
          <Big icon="sketch" lines={['Sketch']} w={24} />
        </Panel>
        <Panel title="Family" width={28} green>
          <Big icon="load" lines={['Load', 'Shapes']} w={26} flat />
        </Panel>
        <Panel title="Placement Plane" width={110} green>
          <Big icon="box" lines={['Current', 'Work Plane']} w={36} />
          <Big icon="boxNear" lines={['Near Cover', 'Reference']} w={38} on />
          <Big icon="boxFar" lines={['Far Cover', 'Reference']} w={32} />
        </Panel>
        <Panel title="Placement Orientation" width={146} green>
          <Big icon="parallel" lines={['Parallel to', 'Work Plane']} w={37} />
          <Big icon="perp" lines={['Perpendicular', 'Segment']} w={45} />
          <Big icon="horizontal" lines={['Horizontal']} w={35} />
          <Big icon="vertical" lines={['Vertical']} w={25} on />
        </Panel>
        <Panel title="Rebar Set" width={130} green>
          <SetForm>
            <FieldLabel htmlFor="layout">Layout:</FieldLabel>
            <Field>
              <Select id="layout" defaultValue="max"><option value="max">Maximum Spacing</option></Select>
              <Icon name="caret" size={5} />
            </Field>
            <FieldLabel htmlFor="qty" $dim>Quantity:</FieldLabel>
            <Field>
              <TextInput id="qty" defaultValue="17" disabled />
              <Spinner><Icon name="chevUp" size={3} /><Icon name="chevDown" size={3} /></Spinner>
            </Field>
            <FieldLabel htmlFor="spacing">Spacing:</FieldLabel>
            <Field><TextInput id="spacing" defaultValue="200.0 mm" /></Field>
          </SetForm>
        </Panel>
        <Panel title="Show Tooltip" width={44} green plain>
          <Big icon="tooltip" lines={['Show Help', 'Tooltip']} w={36} on />
        </Panel>
      </Ribbon>
      <OptionsBar>
        <OptionsTitle>Modify | Place Rebar</OptionsTitle>
        <Gap $w={5} />
        <Combo $w={96}>
          <Select aria-label="Rebar shape" defaultValue="m00"><option value="m00">Rebar Shape : M_00</option></Select>
          <Icon name="chevLight" size={6} />
        </Combo>
        <MoreButton>...</MoreButton>
      </OptionsBar>

      <Workspace>
        <LeftDock>
          <DockTitle $indent={-6}>Properties<PlainButton aria-label="Close properties"><Icon name="close" size={7} /></PlainButton></DockTitle>
          <TypePicker>
            <Thumb />
            <TypeName>Rebar Bar<br />13M</TypeName>
            <Icon name="caret" size={5} />
          </TypePicker>
          <FilterRow>
            <Combo>
              <Select aria-label="Filter" defaultValue="rebar"><option value="rebar">Structural Rebar (1)</option></Select>
              <Icon name="chevLight" size={6} />
            </Combo>
            <PlainButton><Icon name="editType" />Edit Type</PlainButton>
          </FilterRow>
          <Scrolled $h={165}>
            <PropTable>
              <colgroup><col width="81" /><col width="85" /><col width="8" /></colgroup>
              <tbody>
                <SectionRow><th colSpan={2}>Construction</th><th><SectionEnd><Icon name="dblUp" size={6} /></SectionEnd></th></SectionRow>
                {properties.map(([k, v, dim]) => (
                  <PropRow key={k} $dim={dim}>
                    <th scope="row">{k}</th>
                    <td>{v === 'input' ? <CellInput aria-label={k} /> : v === 'check' ? <Tick type="checkbox" aria-label={k} /> : v}</td>
                    <td />
                  </PropRow>
                ))}
                <SectionRow><th colSpan={2}>Rebar Set</th><th><SectionEnd><Icon name="dblUp" size={6} /></SectionEnd></th></SectionRow>
                <PropRow><th scope="row">Layout Rule</th><td>Maximum Spacing</td><td /></PropRow>
              </tbody>
            </PropTable>
            <Bar thumb={46} />
          </Scrolled>
          <DockFooter>
            <HelpLink href="#help">Properties help</HelpLink>
            <ApplyButton>Apply</ApplyButton>
          </DockFooter>
          <DockTitle $indent={-6}>Project Browser - OfficeBuilding.rvt<PlainButton aria-label="Close browser"><Icon name="close" size={7} /></PlainButton></DockTitle>
          <Scrolled>
            <Tree>
              <TreeRow><Dash $w={6} /><Icon name="views" size={9} /><Gap $w={3} /><NodeText>Views (all)</NodeText></TreeRow>
              <Branch name="Structural Plans" />
              {plans.map((n, i) => <Leaf key={n} name={n} last={i === plans.length - 1} />)}
              <Branch name="3D Views" />
              {views3d.map((n, i) => <Leaf key={n} name={n} last={i === views3d.length - 1} />)}
              <Branch name="Elevations (Building Elevation)" />
            </Tree>
            <Bar thumb={46} open />
          </Scrolled>
        </LeftDock>

        <Center>
          <ViewTabs>
            <ViewTab $w={72}><Icon name="view3d" />3D Structure</ViewTab>
            <ViewTab $w={73} $on><Icon name="plan" />Level 3<Push /><Icon name="close" size={7} /></ViewTab>
            <ViewTab $w={74}><Icon name="detail" />Detail 2</ViewTab>
            <ViewTab $w={82}><Icon name="view3d" />Core Wall - Grid 3</ViewTab>
            <ViewTab $w={72}><Icon name="sheet" />Level -1</ViewTab>
            <Push />
            <PlainButton aria-label="Tab list"><Icon name="menuDown" size={5} /></PlainButton>
          </ViewTabs>
          <ViewBody>
            <Canvas>
              <Plan />
              <Hints>
                <tbody>
                  <tr><th scope="row">Space</th><td>Rotate / Flip</td></tr>
                  <tr><th scope="row">[ or ]</th><td>Cycle through orientation options</td></tr>
                  <tr><th scope="row">Up Arrow</th><td>Align to highlighted reference</td></tr>
                </tbody>
              </Hints>
              <SnapTip role="tooltip">Extension</SnapTip>
              <NavBar>
                <NavEnd><Icon name="gear" size={5} /></NavEnd>
                <Icon name="wheel" size={15} />
                <Icon name="caretGrey" size={3} />
                <NavRule />
                <Icon name="zoomRegion" size={10} />
                <Icon name="caretGrey" size={3} />
                <NavEnd><Icon name="gear" size={5} /></NavEnd>
              </NavBar>
            </Canvas>
            <Bar thumb={10} top={225} open />
          </ViewBody>
        </Center>

        <RightDock>
          <DockTitle>Rebar Shape Browser</DockTitle>
          <ShapeList>
            {shapes.map(([n, d], i) => (
              <ShapeCell key={n} $on={i === 0}>
                <ShapeArt viewBox="0 0 147 77" preserveAspectRatio="none" aria-hidden="true">
                  <path d={d} fill="none" stroke={i === 0 ? '#a9bcff' : '#333'} strokeWidth="1.600" />
                </ShapeArt>
                {n}
              </ShapeCell>
            ))}
          </ShapeList>
        </RightDock>
      </Workspace>
    </Window>
  );
}
